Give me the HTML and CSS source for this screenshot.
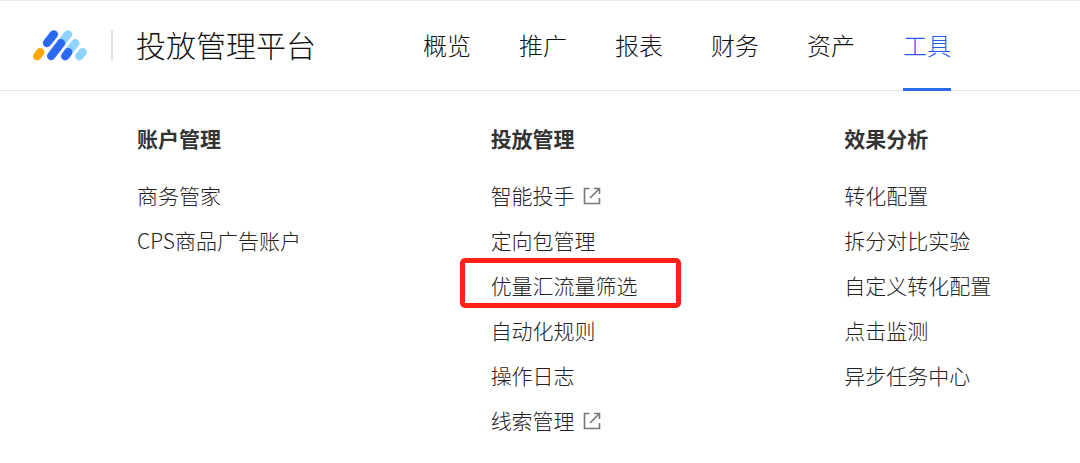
FILE: index.html
```html
<!DOCTYPE html>
<html lang="zh-CN">
<head>
  <meta charset="UTF-8">
  <title>投放管理平台</title>
  <link rel="stylesheet" href="styles.css">
</head>
<body>

<header class="header">
  <a class="logo" href="#" aria-label="首页">
    <svg width="54" height="31" viewBox="0 0 54 31" fill="none" stroke-width="8.4" stroke-linecap="round">
      <path stroke="#8fd3ff" d="M35 4.4L28 13.2M42.3 13.2L35.3 22M49.6 22.2L46.4 26.2"/>
      <path stroke="#2b6af0" d="M20.8 4.4L14 13M28 13.2L18.2 26M35.2 22.2L32.2 26.2"/>
      <path stroke="#ffa60a" d="M7.2 22.2L4.2 26.2"/>
    </svg>
  </a>
  <h1 class="title">投放管理平台</h1>
  <nav class="nav">
    <a href="#">概览</a>
    <a href="#">推广</a>
    <a href="#">报表</a>
    <a href="#">财务</a>
    <a href="#">资产</a>
    <a href="#" class="active">工具</a>
  </nav>
</header>

<main class="menu">
  <section class="column">
    <h2>账户管理</h2>
    <ul>
      <li><a href="#">商务管家</a></li>
      <li><a href="#">CPS商品广告账户</a></li>
    </ul>
  </section>

  <section class="column">
    <h2>投放管理</h2>
    <ul>
      <li>
        <a href="#">智能投手
          <svg class="external" width="18" height="18" viewBox="0 0 18 18">
            <path d="M6.5 1.5H1.5V16.5H16.5V11M11 1.5H16.5V7M16.5 1.5L7 11"/>
          </svg>
        </a>
      </li>
      <li><a href="#">定向包管理</a></li>
      <li><a href="#" class="marked">优量汇流量筛选</a></li>
      <li><a href="#">自动化规则</a></li>
      <li><a href="#">操作日志</a></li>
      <li>
        <a href="#">线索管理
          <svg class="external" width="18" height="18" viewBox="0 0 18 18">
            <path d="M6.5 1.5H1.5V16.5H16.5V11M11 1.5H16.5V7M16.5 1.5L7 11"/>
          </svg>
        </a>
      </li>
    </ul>
  </section>

  <section class="column">
    <h2>效果分析</h2>
    <ul>
      <li><a href="#">转化配置</a></li>
      <li><a href="#">拆分对比实验</a></li>
      <li><a href="#">自定义转化配置</a></li>
      <li><a href="#">点击监测</a></li>
      <li><a href="#">异步任务中心</a></li>
    </ul>
  </section>
</main>

</body>
</html>
```
FILE: styles.css
```css
* {
  box-sizing: border-box;
}
body {
  margin: 0;
  background: #fff;
  color: #111;
  font-family: "Noto Sans CJK SC", sans-serif;
  font-weight: 300;
}
a {
  color: inherit;
  text-decoration: none;
}
.header {
  display: flex;
  align-items: center;
  height: 91px;
  padding-left: 33px;
  border-top: 1px solid #ececee;
  border-bottom: 1px solid #e4e5ea;
}
.logo {
  display: flex;
  padding-right: 24px;
  border-right: 2px solid #e2e3e8;
}
.title {
  margin: 0 0 0 23px;
  padding-bottom: 4px;
  font-size: 30px;
  font-weight: 300;
  line-height: 40px;
}
.nav {
  display: flex;
  align-self: stretch;
  gap: 48px;
  margin-left: 107px;
  font-size: 24px;
}
.nav a {
  display: flex;
  align-items: center;
  padding-bottom: 2px;
}
.nav .active {
  margin-bottom: -1px;
  padding: 0;
  border-bottom: 3px solid #2b6af0;
  border-radius: 2px 2px 0 0;
  color: #1f5df0;
}
.menu {
  display: grid;
  grid-template-columns: 3fr 3fr 2fr;
  padding: 31px 0 20px 137px;
  font-size: 21px;
  line-height: 32px;
}
.column h2 {
  margin: 0 0 18px;
  color: #333;
  font-size: 21px;
  font-weight: 700;
}
.column ul {
  margin: 0;
  padding: 0;
  list-style: none;
}
.column li {
  display: flex;
  align-items: center;
  height: 45px;
  color: #222;
}
.column li a {
  display: flex;
  align-items: center;
  gap: 8px;
}
.external {
  margin-top: 2px;
  fill: none;
  stroke: #777;
  stroke-width: 1.6;
}
.column li .marked {
  height: 50px;
  margin: 0 0 3px -31px;
  padding: 3px 38px 0 26px;
  border: 5px solid #ff2016;
  border-radius: 5px;
}
```
